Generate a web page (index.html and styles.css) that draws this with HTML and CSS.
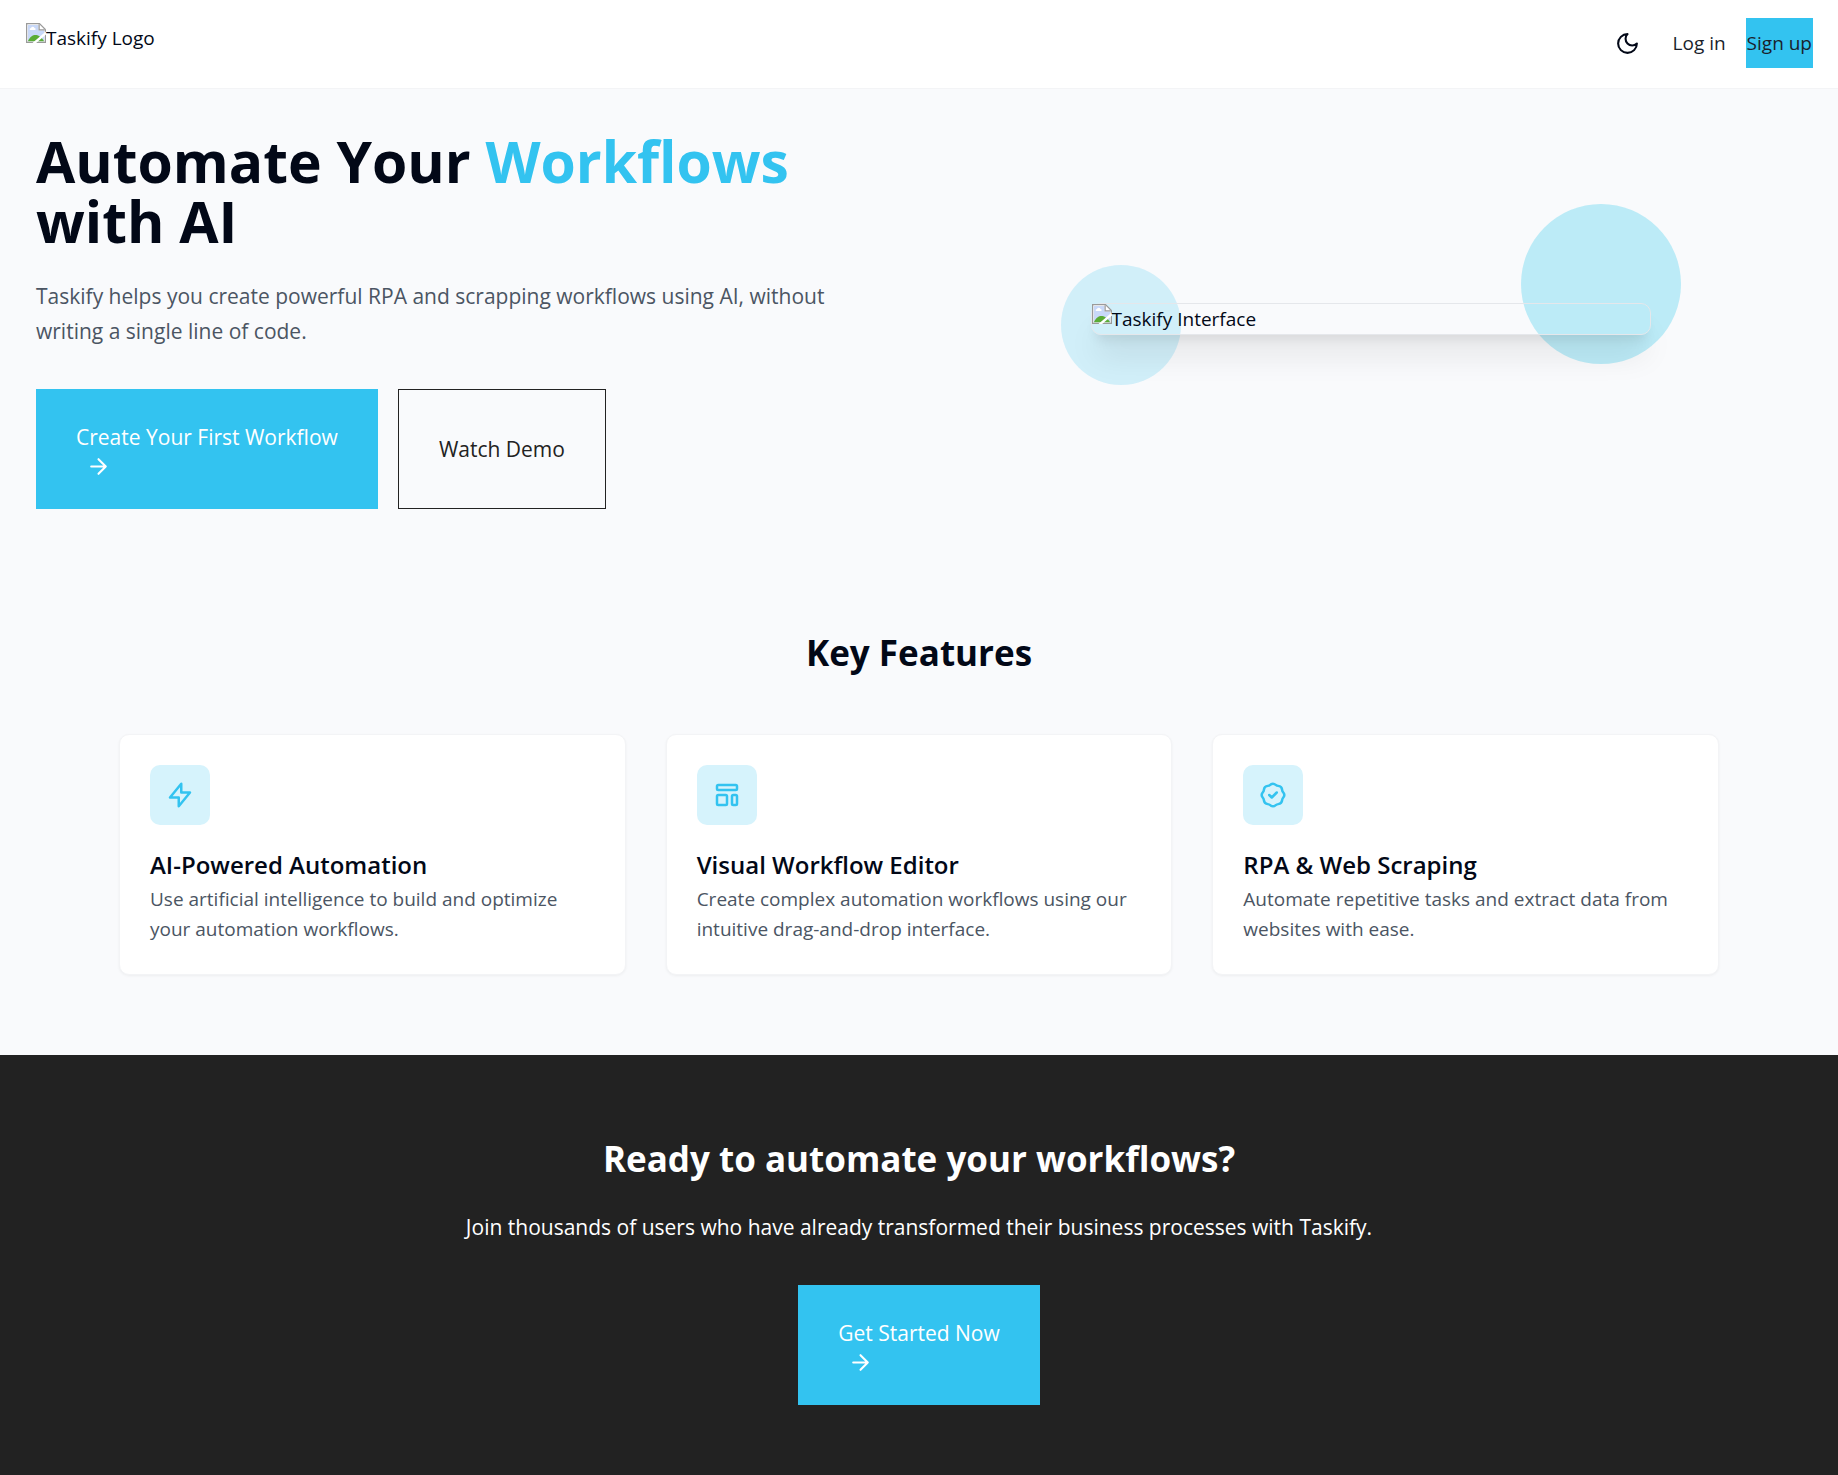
FILE: index.html
```html
<!DOCTYPE html>
<html lang="en">
<head>
  <meta charset="utf-8">
  <meta name="viewport" content="width=device-width, initial-scale=1">
  <title>Taskify</title>
  <link rel="stylesheet" href="styles.css">
</head>
<body>
  <svg class="sprite" aria-hidden="true">
    <symbol id="broken" viewBox="0 0 16 16">
      <path d="M0 0H11L16 5V16H0Z" fill="#9a9a9a"/>
      <path d="M1 1H10.500L15 5.500V15H1Z" fill="#fff"/>
      <path d="M1.500 1.500H10V6H14.500V14.500H1.500Z" fill="#c8d8f8"/>
      <path d="M3 5.500a1.200 1.200 0 0 1 1-1.500 1.500 1.500 0 0 1 2.800 0 1 1 0 0 1 .7 1.500Z" fill="#fff"/>
      <path d="M1.500 14.500C3 11 5.500 9.500 7.500 9.500S12.500 11 14.500 14.500Z" fill="#5aac35"/>
      <path d="M10.500 1V5.500H15" fill="#fff" stroke="#9a9a9a"/>
      <path d="M6 16.500L16.500 7.500" stroke="#fff" stroke-width="2"/>
    </symbol>
    <symbol id="arrow" viewBox="0 0 24 24"><path d="M5 12h14M12 5l7 7-7 7"/></symbol>
  </svg>

  <header class="header">
    <a class="logo" href="#"><svg class="broken"><use href="#broken"/></svg>Taskify Logo</a>
    <nav class="nav">
      <button class="theme" type="button" aria-label="Toggle theme">
        <svg class="icon icon-sm" viewBox="0 0 24 24"><path d="M12 3a6 6 0 0 0 9 9 9 9 0 1 1-9-9Z"/></svg>
      </button>
      <a class="nav-link" href="#">Log in</a>
      <a class="nav-link signup" href="#">Sign up</a>
    </nav>
  </header>

  <main class="main">
    <section class="hero">
      <div>
        <h1 class="hero-title">Automate Your <span class="accent">Workflows</span> with AI</h1>
        <p class="lead hero-lead">Taskify helps you create powerful RPA and scrapping workflows using AI, without writing a single line of code.</p>
        <div class="actions">
          <button class="btn btn-primary" type="button">Create Your First Workflow<svg class="icon icon-sm btn-arrow"><use href="#arrow"/></svg></button>
          <button class="btn btn-outline" type="button">Watch Demo</button>
        </div>
      </div>
      <div class="preview">
        <span class="circle circle-big"></span>
        <span class="circle circle-small"></span>
        <div class="frame"><svg class="broken"><use href="#broken"/></svg>Taskify Interface</div>
      </div>
    </section>

    <section class="features">
      <h2 class="section-title">Key Features</h2>
      <div class="cards">
        <article class="card">
          <div class="card-icon"><svg class="icon" viewBox="0 0 24 24"><path d="M13 10V3L4 14h7v7l9-11h-7z"/></svg></div>
          <h3 class="card-title">AI-Powered Automation</h3>
          <p class="card-text">Use artificial intelligence to build and optimize your automation workflows.</p>
        </article>
        <article class="card">
          <div class="card-icon"><svg class="icon" viewBox="0 0 24 24"><path d="M4 5a1 1 0 011-1h14a1 1 0 011 1v2a1 1 0 01-1 1H5a1 1 0 01-1-1V5zM4 13a1 1 0 011-1h6a1 1 0 011 1v6a1 1 0 01-1 1H5a1 1 0 01-1-1v-6zM16 13a1 1 0 011-1h2a1 1 0 011 1v6a1 1 0 01-1 1h-2a1 1 0 01-1-1v-6z"/></svg></div>
          <h3 class="card-title">Visual Workflow Editor</h3>
          <p class="card-text">Create complex automation workflows using our intuitive drag-and-drop interface.</p>
        </article>
        <article class="card">
          <div class="card-icon"><svg class="icon" viewBox="0 0 24 24"><path d="M9 12l2 2 4-4M7.835 4.697a3.42 3.42 0 001.946-.806 3.42 3.42 0 014.438 0 3.42 3.42 0 001.946.806 3.42 3.42 0 013.138 3.138 3.42 3.42 0 00.806 1.946 3.42 3.42 0 010 4.438 3.42 3.42 0 00-.806 1.946 3.42 3.42 0 01-3.138 3.138 3.42 3.42 0 00-1.946.806 3.42 3.42 0 01-4.438 0 3.42 3.42 0 00-1.946-.806 3.42 3.42 0 01-3.138-3.138 3.42 3.42 0 00-.806-1.946 3.42 3.42 0 010-4.438 3.42 3.42 0 00.806-1.946 3.42 3.42 0 013.138-3.138z"/></svg></div>
          <h3 class="card-title">RPA &amp; Web Scraping</h3>
          <p class="card-text">Automate repetitive tasks and extract data from websites with ease.</p>
        </article>
      </div>
    </section>
  </main>

  <section class="cta">
    <h2 class="section-title cta-title">Ready to automate your workflows?</h2>
    <p class="lead cta-lead">Join thousands of users who have already transformed their business processes with Taskify.</p>
    <button class="btn btn-primary" type="button">Get Started Now<svg class="icon icon-sm btn-arrow"><use href="#arrow"/></svg></button>
  </section>
</body>
</html>
```
FILE: styles.css
```css
:root {
  --blue: #33c3f0;
  --ink: #020817;
  --dark: #222222;
  --muted: #4b5563;
}

* {
  box-sizing: border-box;
  margin: 0;
}

body {
  display: flex;
  flex-direction: column;
  min-height: 100vh;
  background: #f9fafc;
  color: var(--ink);
  font: 19px/30px "Segoe UI", "Open Sans", "Noto Sans", sans-serif;
}

a {
  color: inherit;
  text-decoration: none;
}

button {
  font: inherit;
  color: inherit;
  background: none;
  border: 0;
  padding: 0;
  cursor: pointer;
}

.sprite {
  display: none;
}

.icon {
  display: block;
  width: 30px;
  height: 30px;
  fill: none;
  stroke: currentColor;
  stroke-width: 2;
  stroke-linecap: round;
  stroke-linejoin: round;
}

.icon-sm {
  width: 25px;
  height: 25px;
}

.broken {
  width: 20px;
  height: 20px;
  flex: none;
}

.header {
  display: flex;
  justify-content: space-between;
  align-items: flex-start;
  padding: 18px 25px 20px;
  background: #fff;
  border-bottom: 1px solid #f3f4f6;
}

.logo {
  display: flex;
  padding: 5px 1px;
}

.nav {
  display: flex;
  align-items: center;
  gap: 20px;
}

.theme {
  display: grid;
  place-items: center;
  width: 50px;
  height: 50px;
}

.nav-link {
  line-height: 50px;
  color: #1a1f2c;
}

.signup {
  padding: 0 1px;
  background: var(--blue);
}

.hero {
  display: grid;
  grid-template-columns: 1fr 1fr;
  gap: 40px;
  align-items: center;
  padding: 40px 36px;
}

.hero-title {
  padding-top: 2px;
  margin-bottom: 28px;
  font-size: 57px;
  line-height: 60px;
  font-weight: 700;
}

.accent {
  color: var(--blue);
}

.lead {
  margin-bottom: 40px;
  font-size: 21px;
  line-height: 35px;
  color: var(--muted);
}

.hero-lead {
  max-width: 840px;
}

.actions {
  display: flex;
  gap: 20px;
}

.btn {
  min-height: 120px;
  padding: 30px 40px;
  font-size: 21px;
  line-height: 30px;
  text-align: left;
}

.btn-primary {
  padding: 33px 40px 30px;
  background: var(--blue);
  color: #fff;
}

.btn-outline {
  border: 1px solid var(--dark);
  color: var(--dark);
}

.btn-arrow {
  margin: 2px 0 0 10px;
}

.preview {
  position: relative;
  width: 100%;
  max-width: 560px;
  justify-self: center;
}

.frame {
  position: relative;
  display: flex;
  border: 1px solid #e5e7eb;
  border-radius: 10px;
  box-shadow: 0 25px 31px -6px rgb(0 0 0 / 10%), 0 10px 12px -6px rgb(0 0 0 / 10%);
}

.circle {
  position: absolute;
  border-radius: 50%;
  background: var(--blue);
}

.circle-big {
  top: -99px;
  right: -30px;
  width: 160px;
  height: 160px;
  background: #30c9eb;
  opacity: 0.3;
}

.circle-small {
  bottom: -50px;
  left: -30px;
  width: 120px;
  height: 120px;
  opacity: 0.2;
}

.features {
  max-width: 1600px;
  margin: 0 auto;
  padding: 80px 0;
}

.section-title {
  margin-bottom: 58px;
  font-size: 35px;
  line-height: 47px;
  font-weight: 700;
  text-align: center;
}

.cards {
  display: grid;
  grid-template-columns: repeat(3, 1fr);
  gap: 40px;
}

.card {
  padding: 30px;
  background: #fff;
  border: 1px solid #f3f4f6;
  border-radius: 10px;
  box-shadow: 0 1px 3px rgb(0 0 0 / 5%);
}

.card-icon {
  display: grid;
  place-items: center;
  width: 60px;
  height: 60px;
  margin-bottom: 20px;
  border-radius: 10px;
  background: #d6f3fc;
  color: var(--blue);
}

.card-title {
  font-size: 24px;
  line-height: 39px;
  font-weight: 600;
}

.card-text {
  color: var(--muted);
}

.cta {
  flex: 1;
  padding: 80px 20px 70px;
  background: var(--dark);
  color: #fff;
  text-align: center;
}

.cta-title {
  margin-bottom: 28px;
}

.cta-lead {
  color: #fff;
}
```
